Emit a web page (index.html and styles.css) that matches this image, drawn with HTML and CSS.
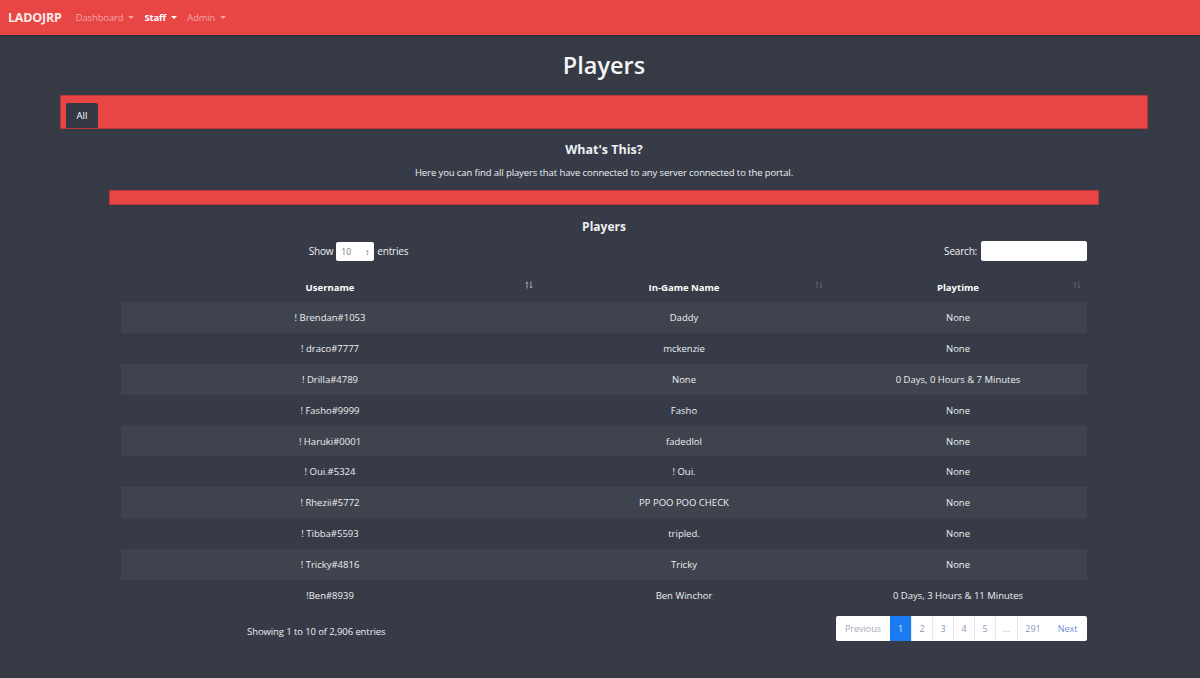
FILE: index.html
```html
<!DOCTYPE html>
<html lang="en">
<head>
<meta charset="utf-8">
<title>Players</title>
<link rel="stylesheet" href="styles.css">
</head>
<body>
<nav class="navbar">
  <span class="brand">LADOJRP</span>
  <ul class="nav">
    <li class="nav-item muted">Dashboard <span class="caret"></span></li>
    <li class="nav-item active">Staff <span class="caret"></span></li>
    <li class="nav-item muted">Admin <span class="caret"></span></li>
  </ul>
</nav>
<main class="page">
  <h1 class="title">Players</h1>
  <section class="card">
    <div class="tabs"><span class="tab">All</span></div>
    <div class="card-body">
      <h2 class="about-title">What's This?</h2>
      <p class="about-text">Here you can find all players that have connected to any server connected to the portal.</p>
      <div class="redbar"></div>
      <h3 class="table-title">Players</h3>
      <div class="dt">
        <div class="dt-top">
          <div class="dt-length">Show <span class="select">10 <span class="spin">&#8597;</span></span> entries</div>
          <div class="dt-search">Search: <span class="search-input"></span></div>
        </div>
        <table class="players">
          <thead>
            <tr>
              <th class="c1">Username <svg class="sort on" viewBox="0 0 8 8" width="8" height="8"><path d="M2 7.5V1M0.6 2.4L2 1l1.4 1.4M6 0.5V7M4.6 5.6L6 7l1.4-1.4" fill="none" stroke="currentColor" stroke-width="0.9"/></svg></th>
              <th class="c2">In-Game Name <svg class="sort" viewBox="0 0 8 8" width="8" height="8"><path d="M2 7.5V1M0.6 2.4L2 1l1.4 1.4M6 0.5V7M4.6 5.6L6 7l1.4-1.4" fill="none" stroke="currentColor" stroke-width="0.9"/></svg></th>
              <th class="c3">Playtime <svg class="sort" viewBox="0 0 8 8" width="8" height="8"><path d="M2 7.5V1M0.6 2.4L2 1l1.4 1.4M6 0.5V7M4.6 5.6L6 7l1.4-1.4" fill="none" stroke="currentColor" stroke-width="0.9"/></svg></th>
            </tr>
          </thead>
          <tbody>
            <tr><td>! Brendan#1053</td><td>Daddy</td><td>None</td></tr>
            <tr><td>! draco#7777</td><td>mckenzie</td><td>None</td></tr>
            <tr><td>! Drilla#4789</td><td>None</td><td>0 Days, 0 Hours &amp; 7 Minutes</td></tr>
            <tr><td>! Fasho#9999</td><td>Fasho</td><td>None</td></tr>
            <tr><td>! Haruki#0001</td><td>fadedlol</td><td>None</td></tr>
            <tr><td>! Oui.#5324</td><td>! Oui.</td><td>None</td></tr>
            <tr><td>! Rhezii#5772</td><td>PP POO POO CHECK</td><td>None</td></tr>
            <tr><td>! Tibba#5593</td><td>tripled.</td><td>None</td></tr>
            <tr><td>! Tricky#4816</td><td>Tricky</td><td>None</td></tr>
            <tr><td>!Ben#8939</td><td>Ben Winchor</td><td>0 Days, 3 Hours &amp; 11 Minutes</td></tr>
          </tbody>
        </table>
        <div class="dt-bottom">
          <div class="dt-info">Showing 1 to 10 of 2,906 entries</div>
          <ul class="pagination">
            <li class="pg prev">Previous</li>
            <li class="pg current">1</li>
            <li class="pg">2</li>
            <li class="pg">3</li>
            <li class="pg">4</li>
            <li class="pg">5</li>
            <li class="pg dots">…</li>
            <li class="pg wide">291</li>
            <li class="pg next">Next</li>
          </ul>
        </div>
      </div>
    </div>
  </section>
</main>
</body>
</html>
```
FILE: styles.css
```css
* { box-sizing: border-box; }
html, body { margin: 0; padding: 0; }
body {
  background: #363a45;
  color: #eef0f3;
  font-family: "Open Sans", "Noto Sans", sans-serif;
  font-size: 10px;
  width: 1200px;
  height: 678px;
  overflow: hidden;
}
.navbar {
  height: 35px;
  background: #e84545;
  display: flex;
  align-items: center;
  padding: 0 8px;
  box-shadow: 0 1px 2px rgba(0,0,0,0.25);
}
.brand {
  font-weight: 700;
  font-size: 12.5px;
  color: #fbe9e9;
  margin-right: 14px;
  letter-spacing: -0.2px;
}
.nav { list-style: none; margin: 0; padding: 0; display: flex; gap: 10px; }
.nav-item { font-size: 9.5px; display: flex; align-items: center; gap: 5px; letter-spacing: -0.15px; }
.nav-item.muted { color: #f5a4a4; }
.nav-item.active { color: #ffffff; font-weight: 700; }
.caret {
  display: inline-block;
  width: 0; height: 0;
  border-left: 3px solid transparent;
  border-right: 3px solid transparent;
  border-top: 3.5px solid currentColor;
}
.page { margin: 0 52px 0 60px; }
.title {
  margin: 14px 0 0;
  height: 46px;
  text-align: center;
  font-size: 23.5px;
  font-weight: 600;
  color: #f4f5f7;
}
.card {
  border-radius: 3px;
  background: #373b47;
  box-shadow: 0 0 0 1px rgba(255,255,255,0.015);
  height: 570px;
}
.tabs {
  background: #e84545;
  border: 1px solid #b83636;
  height: 34px;
  display: flex;
  align-items: flex-end;
  padding-left: 5px;
  width: 1088px;
}
.tab {
  background: #343843;
  color: #ffffff;
  font-size: 9.5px;
  width: 32px;
  height: 25px;
  display: flex;
  align-items: center;
  justify-content: center;
  border-radius: 2px 2px 0 0;
}
.card-body { padding: 0 49px; width: 1088px; }
.about-title {
  margin: 12px 0 0;
  text-align: center;
  font-size: 12.5px;
  font-weight: 700;
  height: 20px;
  line-height: 18px;
}
.about-text {
  margin: 4px 0 0;
  text-align: center;
  font-size: 9.5px;
  height: 16px;
  line-height: 16px;
  color: #eceef2;
  letter-spacing: -0.1px;
}
.redbar {
  margin-top: 9px;
  height: 15px;
  background: #e84545;
  border: 1px solid #b83636;
}
.table-title {
  margin: 13px 0 0;
  text-align: center;
  font-size: 12px;
  font-weight: 700;
  height: 18px;
  line-height: 18px;
}
.dt { margin: 0 12px 0 12px; }
.dt-top {
  display: grid;
  grid-template-columns: 1fr 1fr;
  align-items: center;
  height: 22px;
  margin-top: 4px;
}
.dt-length { display: flex; justify-content: center; align-items: center; gap: 3px; padding-right: 8px; letter-spacing: -0.2px; }
.select {
  display: inline-flex;
  align-items: center;
  justify-content: space-between;
  width: 38px;
  height: 19px;
  background: #fff;
  color: #777;
  border-radius: 2px;
  padding: 0 5px;
  font-size: 8.5px;
  letter-spacing: 0;
}
.spin { color: #555; font-size: 8px; font-weight: 700; }
.dt-search { display: flex; justify-content: flex-end; align-items: center; gap: 4px; letter-spacing: -0.2px; }
.search-input {
  display: inline-block;
  width: 106px;
  height: 20px;
  background: #fff;
  border-radius: 2px;
}
.players {
  width: 100%;
  border-collapse: collapse;
  margin-top: 10px;
}
.players th {
  position: relative;
  height: 30px;
  font-weight: 700;
  font-size: 9.5px;
  color: #fff;
  text-align: center;
  padding: 0 10px;
}
.players th.c1 { width: 418px; }
.players th.c2 { width: 290px; }
.sort {
  position: absolute;
  right: 6px;
  top: 9px;
  color: #5d6273;
}
.sort.on { color: #aeb2bd; }
.players td {
  height: 30.9px;
  text-align: center;
  font-size: 9.5px;
  color: #eceef1;
}
.players tbody tr:nth-child(odd) { background: #3f434e; }
.dt-bottom {
  display: grid;
  grid-template-columns: 5fr 7fr;
  align-items: center;
  margin-top: 5px;
  height: 25px;
}
.dt-info { text-align: center; font-size: 9.5px; color: #eceef1; padding: 6px 12px 0 0; letter-spacing: -0.1px; }
.pagination {
  list-style: none;
  margin: 0;
  padding: 0;
  display: flex;
  justify-content: flex-end;
}
.pg {
  height: 25px;
  width: 21px;
  display: flex;
  align-items: center;
  justify-content: center;
  background: #fff;
  color: #8c9ab8;
  font-size: 9px;
  border-left: 1px solid #e6e8ec;
}
.pg.prev { width: 54px; color: #a2a8b4; border-left: none; border-radius: 2px 0 0 2px; }
.pg.current { background: #1a7cf0; color: #dce8fb; border-left: none; }
.pg.dots { width: 22px; color: #aab; }
.pg.wide { width: 31px; }
.pg.next { width: 39px; color: #6f8fcf; border-radius: 0 2px 2px 0; border-left: none; }
```
